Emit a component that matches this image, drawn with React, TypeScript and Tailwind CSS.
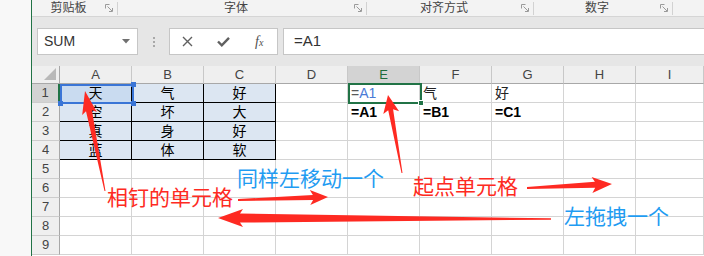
import React from 'react';

const COLS = ['A', 'B', 'C', 'D', 'E', 'F', 'G', 'H', 'I'];

const DATA = [
  ['天', '气', '好'],
  ['空', '坏', '大'],
  ['真', '身', '好'],
  ['蓝', '体', '软'],
];

// tapered arrow polygon from tail to tip
function arrow(x0: number, y0: number, x1: number, y1: number, w0: number, w1: number, hw: number, hl: number) {
  const dx = x1 - x0;
  const dy = y1 - y0;
  const len = Math.hypot(dx, dy);
  const ux = dx / len;
  const uy = dy / len;
  const px = -uy;
  const py = ux;
  const nx = x1 - ux * hl;
  const ny = y1 - uy * hl;
  const bx = nx - ux * 3;
  const by = ny - uy * 3;
  const p = (x: number, y: number) => `${x.toFixed(1)},${y.toFixed(1)}`;
  return [
    p(x0 + (px * w0) / 2, y0 + (py * w0) / 2),
    p(nx + (px * w1) / 2, ny + (py * w1) / 2),
    p(bx + (px * hw) / 2, by + (py * hw) / 2),
    p(x1, y1),
    p(bx - (px * hw) / 2, by - (py * hw) / 2),
    p(nx - (px * w1) / 2, ny - (py * w1) / 2),
    p(x0 - (px * w0) / 2, y0 - (py * w0) / 2),
  ].join(' ');
}

function Launcher() {
  return (
    <svg width="8" height="8" viewBox="0 0 8 8" className="mr-[4px]">
      <path d="M0.5 4.5V0.5H4.5" fill="none" stroke="#9a9a9a" strokeWidth="1" />
      <path d="M2.5 2.5L7 7M7.5 4V7.5H4" fill="none" stroke="#9a9a9a" strokeWidth="1" />
    </svg>
  );
}

function Group({ label, width }: { label: string; width: string }) {
  return (
    <div className={`flex items-center h-full ${width}`}>
      <div className="flex-1 text-center leading-none">{label}</div>
      <Launcher />
      <div className="w-px h-[13px] bg-[#d2d2d2]" />
    </div>
  );
}

function Cell({ r, c }: { r: number; c: number }) {
  const inData = r <= 4 && c <= 2;
  if (inData) {
    const bg = r === 1 && c === 0 ? 'bg-[#c9dbf0]' : 'bg-[#dce6f2]';
    return (
      <div className={`${bg} border-r border-b border-black flex items-center justify-center text-[14px] text-black`}>
        {DATA[r - 1][c]}
      </div>
    );
  }
  let content: React.ReactNode = null;
  if (r === 1 && c === 4) {
    content = (
      <span className="text-[14px]">
        <span className="text-[#5a5a5a]">=</span>
        <span className="text-[#4a7bd6]">A1</span>
      </span>
    );
  } else if (r === 1 && c === 5) {
    content = <span className="text-[14px] text-[#222]">气</span>;
  } else if (r === 1 && c === 6) {
    content = <span className="text-[14px] text-[#222]">好</span>;
  } else if (r === 2 && c >= 4 && c <= 6) {
    content = <span className="text-[14px] font-bold text-black">{['=A1', '=B1', '=C1'][c - 4]}</span>;
  }
  return <div className="border-r border-b border-[#d4d4d4] flex items-center pl-[3px] bg-white">{content}</div>;
}

export default function App() {
  const rows = [1, 2, 3, 4, 5, 6, 7, 8, 9];
  return (
    <div className="relative w-[704px] h-[256px] overflow-hidden flex bg-white font-['Liberation_Sans','Noto_Sans_CJK_SC',sans-serif]">
      <div className="w-[31px] bg-[#f8f8f8]" />
      <div className="w-px bg-[#217346]" />
      <div className="flex-1 flex flex-col">
        {/* ribbon group labels */}
        <div className="h-[17px] flex bg-[#f3f3f3] border-b border-[#d5d5d5] text-[12px] text-[#444]">
          <Group label="剪贴板" width="w-[86px]" />
          <Group label="字体" width="w-[249px]" />
          <Group label="对齐方式" width="w-[167px]" />
          <Group label="数字" width="w-[139px]" />
        </div>

        {/* formula bar */}
        <div className="h-[49px] bg-[#e6e6e6] pt-[11px]">
          <div className="h-[27px] flex">
            <div className="ml-[5px] w-[101px] bg-white border border-[#c6c6c6] flex items-center pl-[6px] text-[14px] text-[#333]">
              SUM
              <svg width="8" height="5" viewBox="0 0 8 5" className="ml-auto mr-[7px]">
                <path d="M0 0H8L4 4.5Z" fill="#707070" />
              </svg>
            </div>
            <div className="w-[31px] flex flex-col items-center justify-center gap-[2px]">
              <div className="w-[2px] h-[2px] bg-[#a8a8a8]" />
              <div className="w-[2px] h-[2px] bg-[#a8a8a8]" />
              <div className="w-[2px] h-[2px] bg-[#a8a8a8]" />
            </div>
            <div className="w-[109px] bg-white border border-[#c6c6c6] grid grid-cols-3 items-center">
              <div className="flex justify-center">
                <svg width="11" height="11" viewBox="0 0 11 11">
                  <path d="M1 1L10 10M10 1L1 10" stroke="#606060" strokeWidth="1.4" />
                </svg>
              </div>
              <div className="flex justify-center">
                <svg width="13" height="11" viewBox="0 0 13 11">
                  <path d="M1 5.5L4.8 9.3L12 1.8" fill="none" stroke="#606060" strokeWidth="2.4" />
                </svg>
              </div>
              <div className="flex justify-center font-['Liberation_Serif',serif] italic text-[14px] text-[#505050] leading-none">
                f<span className="text-[10px] mt-[3px]">x</span>
              </div>
            </div>
            <div className="ml-[5px] flex-1 bg-white border-y border-l border-[#c6c6c6] flex items-center pl-[10px] text-[15px] text-[#333]">
              =A1
            </div>
          </div>
        </div>

        {/* sheet */}
        <div className="relative">
          <div className="grid grid-cols-[28px_repeat(8,72px)_68px] grid-rows-[18px_repeat(9,19px)]">
            <div className="bg-[#efefef] border-r border-b border-[#a8a8a8] relative">
              <svg width="12" height="12" viewBox="0 0 12 12" className="absolute right-[3px] bottom-[3px]">
                <path d="M12 0V12H0Z" fill="#b9b9b9" />
              </svg>
            </div>
            {COLS.map((col) => (
              <div
                key={col}
                className={`border-r border-b border-r-[#c8c8c8] border-b-[#a8a8a8] flex items-center justify-center text-[13px] ${
                  col === 'E' ? 'bg-[#d3d3d3] text-[#1d6b3c]' : 'bg-[#efefef] text-[#444]'
                }`}
              >
                {col}
              </div>
            ))}
            {rows.map((r) => (
              <React.Fragment key={r}>
                <div
                  className={`border-b border-b-[#cdcdcd] flex items-center justify-center text-[13px] text-[#444] ${
                    r === 1 ? 'bg-[#d3d3d3] border-r-2 border-r-[#217346]' : 'bg-[#efefef] border-r border-r-[#a8a8a8]'
                  }`}
                >
                  {r}
                </div>
                {COLS.map((_, c) => (
                  <Cell key={c} r={r} c={c} />
                ))}
              </React.Fragment>
            ))}
          </div>

          {/* reference highlight on A1 */}
          <div className="absolute left-[28px] top-[18px] w-[74px] h-[20px] border-2 border-[#3a75d6]">
            <div className="absolute -right-[4px] -top-[4px] w-[5px] h-[5px] bg-[#3a75d6]" />
            <div className="absolute -right-[4px] -bottom-[4px] w-[5px] h-[5px] bg-[#3a75d6]" />
            <div className="absolute -left-[4px] -bottom-[4px] w-[5px] h-[5px] bg-[#3a75d6]" />
          </div>
          {/* active cell E1 */}
          <div className="absolute left-[316px] top-[17px] w-[74px] h-[21px] border-2 border-[#217346]">
            <div className="absolute -right-[4px] -bottom-[4px] w-[6px] h-[6px] bg-[#217346] border border-white" />
          </div>
        </div>
      </div>

      {/* annotations */}
      <svg width="704" height="256" className="absolute left-0 top-0 pointer-events-none">
        <g fill="#fe2a22">
          <polygon points={arrow(105, 191, 85, 91, 1, 6, 15, 20)} />
          <polygon points={arrow(238, 200, 328, 197, 2, 5, 15, 15)} />
          <polygon points={arrow(551, 219, 218, 218, 1.5, 9, 18, 22)} />
          <polygon points={arrow(527, 188, 612, 184, 2, 6, 16, 17)} />
          <polygon points={arrow(402, 173, 388, 95, 1, 5, 16, 15)} />
        </g>
      </svg>
      <div className="absolute left-[237px] top-[167px] text-[21px] leading-none text-[#1f9cf2] font-['Noto_Sans_CJK_SC',sans-serif]">
        同样左移动一个
      </div>
      <div className="absolute left-[107px] top-[186px] text-[21px] leading-none text-[#fe2a22] font-['Noto_Sans_CJK_SC',sans-serif]">
        相钉的单元格
      </div>
      <div className="absolute left-[413px] top-[175px] text-[21px] leading-none text-[#fe2a22] font-['Noto_Sans_CJK_SC',sans-serif]">
        起点单元格
      </div>
      <div className="absolute left-[564px] top-[205px] text-[21px] leading-none text-[#1f9cf2] font-['Noto_Sans_CJK_SC',sans-serif]">
        左拖拽一个
      </div>
    </div>
  );
}
